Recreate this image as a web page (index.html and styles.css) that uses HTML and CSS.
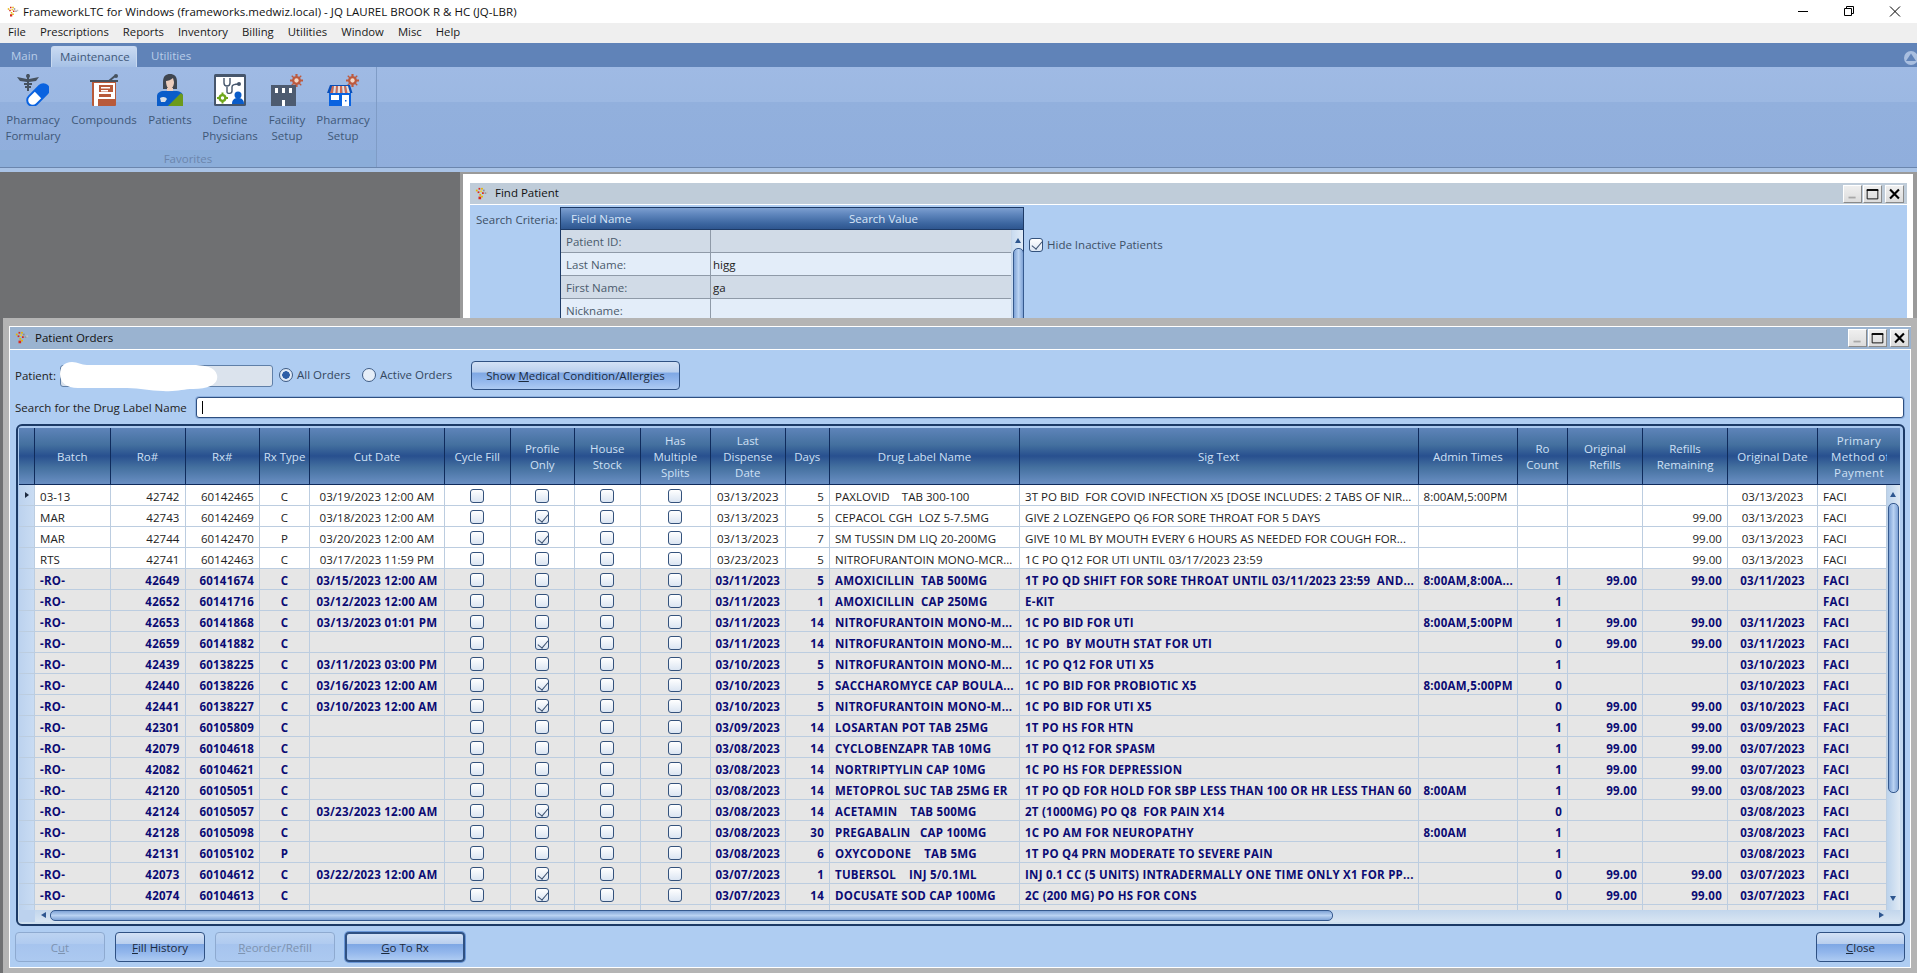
FILE: index.html
```html
<!DOCTYPE html>
<html lang="en">
<head>
<meta charset="utf-8">
<title>FrameworkLTC for Windows</title>
<link rel="stylesheet" href="styles.css">
</head>
<body>
<svg class="defs" width="0" height="0" aria-hidden="true">
  <symbol id="appicon" viewBox="0 0 16 16">
    <rect x="1" y="3" width="2" height="2" fill="#e8b400"/><rect x="4" y="1" width="2" height="2" fill="#d62a1e"/><rect x="7" y="1" width="2" height="2" fill="#e8b400"/><rect x="3" y="5" width="2" height="2" fill="#d62a1e"/><rect x="6" y="4" width="2" height="2" fill="#f2cc2a"/><rect x="9" y="3" width="2" height="2" fill="#8d8d8d"/><rect x="5" y="8" width="2" height="2" fill="#e8b400"/><rect x="8" y="6" width="2" height="2" fill="#d62a1e"/><rect x="11" y="6" width="2" height="2" fill="#9a9a9a"/><rect x="13" y="5" width="2" height="2" fill="#c4c4c4"/><rect x="4" y="11" width="3" height="3" fill="#d62a1e"/><rect x="7" y="10" width="2" height="2" fill="#e8b400"/>
  </symbol>
  <symbol id="gear" viewBox="0 0 12 12">
    <path fill="#bd5a3f" d="M5 0h2v2l1.500.6L10 1.200 10.800 2 9.400 3.500 10 5h2v2h-2l-.6 1.500L10.800 10 10 10.800 8.500 9.400 7 10v2H5v-2l-1.500-.6L2 10.800 1.200 10l1.400-1.500L2 7H0V5h2l.6-1.500L1.200 2 2 1.200l1.500 1.400L5 2z"/>
    <circle cx="6" cy="6" r="2" fill="#f0d8c8"/>
  </symbol>
  <symbol id="winmin" viewBox="0 0 19 18"><rect x="5" y="12" width="8" height="2" fill="#a8a8a8"/></symbol>
  <symbol id="winmax" viewBox="0 0 19 18"><path fill="none" stroke="#000" d="M3.500 4.500h12v10h-12z"/><rect x="3" y="3.500" width="13" height="2" fill="#000"/></symbol>
  <symbol id="winclose" viewBox="0 0 19 18"><path stroke="#000" stroke-width="2.400" d="M4.500 4l10 10M14.500 4l-10 10"/></symbol>
</svg>

<header class="titlebar">
  <svg class="app-icon"><use href="#appicon"/></svg>
  <span class="title-text">FrameworkLTC for Windows (frameworks.medwiz.local) - JQ LAUREL BROOK R &amp; HC (JQ-LBR)</span>
  <div class="sys-buttons">
    <svg class="sys-btn" viewBox="0 0 46 20"><path stroke="#000" d="M18 10.500h10"/></svg>
    <svg class="sys-btn" viewBox="0 0 46 20"><path fill="none" stroke="#000" d="M18.500 7.500h7v7h-7zM20.500 7.500v-2h7v7h-2"/></svg>
    <svg class="sys-btn" viewBox="0 0 46 20"><path stroke="#000" d="M18 5.500l10 10M28 5.500l-10 10"/></svg>
  </div>
</header>

<nav class="menubar">
  <span>File</span><span>Prescriptions</span><span>Reports</span><span>Inventory</span><span>Billing</span><span>Utilities</span><span>Window</span><span>Misc</span><span>Help</span>
</nav>

<div class="tabstrip">
  <span class="tab">Main</span>
  <span class="tab active">Maintenance</span>
  <span class="tab tab-last">Utilities</span>
  <span class="collapse"><svg width="14" height="14" viewBox="0 0 14 14"><circle cx="7" cy="7" r="7" fill="#a9bfe0"/><path d="M7 2.500L12 10H2z" fill="#6083b8"/></svg></span>
</div>

<section class="ribbon">
  <div class="rgroup">
    <div class="rbuttons">
      <div class="rbtn">
        <svg class="ricon" viewBox="0 0 32 32">
          <g fill="#46525f"><rect x="10" y="0" width="2" height="17"/><path d="M0 3l10 2v3L3 7zM22 3L12 5v3l7-1z"/><path d="M7 9h8v2H7zM8 12h6v2H8z"/><circle cx="11" cy="2" r="2"/></g>
          <g transform="rotate(-45 21 21)"><rect x="7" y="14.500" width="28" height="13" rx="6.500" fill="#0a63e0"/><path d="M21 16.500H13.500a4.500 4.500 0 0 0 0 9H21z" fill="#fff"/></g>
        </svg>
        <span>Pharmacy<br>Formulary</span>
      </div>
      <div class="rbtn">
        <svg class="ricon" viewBox="0 0 32 32">
          <path d="M21 7l6-5" stroke="#46525f" stroke-width="2"/><circle cx="28" cy="2" r="2" fill="#46525f"/>
          <rect x="2" y="6" width="28" height="2" fill="#46525f"/>
          <path d="M4 8h24v23a1 1 0 0 1-1 1H5a1 1 0 0 1-1-1z" fill="#b85a3a"/>
          <path d="M6 9h21v16H10v7H6z" fill="#fff"/>
          <path d="M11 11h14v7H11zM11 20h12v3H11z" fill="#b85a3a"/>
          <path d="M13 13h9v1.500h-9zM13 16h7v1.500h-7z" fill="#fff"/>
        </svg>
        <span>Compounds</span>
      </div>
      <div class="rbtn">
        <svg class="ricon" viewBox="0 0 32 32">
          <path d="M9 8c0-6 3-8 7-8s7 2 7 8v7H9z" fill="#3f4650"/>
          <path d="M12 7c2 0 5-1 7-3l1 4c0 4-2 7-4 7s-4-3-4-8z" fill="#eccdbd"/>
          <path d="M13 14h6v6h-6z" fill="#eccdbd"/>
          <path d="M3 32V22c0-3 3-5 7-5h11c5 0 8 2 8 5v10z" fill="#0a5cc9"/>
          <path d="M14 32l13-13 2 2v11z" fill="#6c9a1b"/>
          <path d="M6 24c3-2 6-1 7 1l-2 3H7z" fill="#d9dee6"/>
        </svg>
        <span>Patients</span>
      </div>
      <div class="rbtn">
        <svg class="ricon" viewBox="0 0 32 32">
          <rect width="32" height="32" rx="1.500" fill="#46566c"/>
          <rect x="2" y="3" width="28" height="27" fill="#fff"/>
          <path d="M10 4v5c0 4 6 4 6 0V4M13 13v5c0 2 5 2 5-1v-4c0-2 3-3 7-3" fill="none" stroke="#46566c" stroke-width="1.400"/>
          <circle cx="25" cy="10" r="2" fill="#46566c"/>
          <g fill="#6fa71b"><circle cx="8.500" cy="24" r="4"/><path d="M7.500 18.500h2v11h-2zM3 23h11v2H3z"/></g><circle cx="8.500" cy="24" r="1.700" fill="#fff"/>
          <circle cx="24" cy="21" r="3.500" fill="#0a5cc9"/><path d="M18 30c0-5 3-6 6-6s6 1 6 6z" fill="#0a5cc9"/>
        </svg>
        <span>Define<br>Physicians</span>
      </div>
      <div class="rbtn">
        <svg class="ricon" viewBox="0 0 32 32">
          <use href="#gear" x="19" y="0" width="13" height="13"/>
          <path d="M0 11h25v21H0z" fill="#4d5b70"/>
          <path d="M4 14h3v5H4zM11 14h3v5h-3zM18 14h3v5h-3zM11 26h3v6h-3z" fill="#fff"/>
        </svg>
        <span>Facility<br>Setup</span>
      </div>
      <div class="rbtn">
        <svg class="ricon" viewBox="0 0 32 32">
          <use href="#gear" x="19" y="0" width="13" height="13"/>
          <rect x="2" y="17" width="22" height="15" fill="#0a63e0"/>
          <path d="M3 11h20l2.500 8H0z" fill="#0a4fb8"/>
          <path d="M5 12h2l-1 7H3zM9 12h2l-.5 7h-2zM13 12h2l.5 7h-2.500zM17 12h2l1.500 7H18z" fill="#cf6a52"/>
          <path d="M7 12h2l-.5 7H6zM11 12h2v7h-2.500zM15 12h2l1 7h-2.500zM19 12h2l2 7h-2.500z" fill="#f2dcd2"/>
          <path d="M4 21h8v5H4zM15 21h7v11h-7z" fill="#fff"/>
          <rect x="18" y="26" width="1.500" height="1.500" fill="#0a63e0"/>
        </svg>
        <span>Pharmacy<br>Setup</span>
      </div>
    </div>
    <div class="rgroup-label">Favorites</div>
  </div>
</section>
<div class="ribbon-foot"></div>

<main class="mdi">
  <section class="win win-find">
    <div class="find-title">
      <svg class="win-icon"><use href="#appicon"/></svg>
      <span class="win-name">Find Patient</span>
      <div class="win-controls">
        <svg class="wc" viewBox="0 0 19 18"><use href="#winmin"/></svg>
        <svg class="wc" viewBox="0 0 19 18"><use href="#winmax"/></svg>
        <svg class="wc wc-close" viewBox="0 0 19 18"><use href="#winclose"/></svg>
      </div>
    </div>
    <div class="find-body">
      <label class="find-label">Search Criteria:</label>
      <div class="find-grid">
        <div class="find-head"><span class="fh1">Field Name</span><span class="fh2">Search Value</span></div>
        <div class="find-main">
          <div class="find-rows">
            <div class="frow alt"><span class="fk">Patient ID:</span><span class="fv"></span></div>
            <div class="frow"><span class="fk">Last Name:</span><span class="fv">higg</span></div>
            <div class="frow alt"><span class="fk">First Name:</span><span class="fv">ga</span></div>
            <div class="frow"><span class="fk">Nickname:</span><span class="fv"></span></div>
          </div>
          <div class="find-scroll"><i class="arrow-up"></i><i class="vthumb"></i></div>
        </div>
      </div>
      <label class="hide-inactive"><i class="cb on"></i>Hide Inactive Patients</label>
    </div>
  </section>

  <section class="win win-orders">
    <div class="orders-title">
      <svg class="win-icon"><use href="#appicon"/></svg>
      <span class="win-name">Patient Orders</span>
      <div class="win-controls">
        <svg class="wc" viewBox="0 0 19 18"><use href="#winmin"/></svg>
        <svg class="wc" viewBox="0 0 19 18"><use href="#winmax"/></svg>
        <svg class="wc wc-close" viewBox="0 0 19 18"><use href="#winclose"/></svg>
      </div>
    </div>
    <div class="orders-body">
      <div class="patient-row">
        <span class="patient-label">Patient:</span>
        <div class="patient-box"></div>
        <label class="radio-all"><i class="radio on"></i>All Orders</label>
        <label class="radio-active"><i class="radio"></i>Active Orders</label>
        <button class="btn btn-med">Show <u>M</u>edical Condition/Allergies</button>
        <svg class="redact" viewBox="0 0 158 30"><path fill="#fff" d="M12 0c6 0 9 3 15 3h104c14 0 24 2 26 10 2 9-8 14-24 14-10 0-16 3-30 2-14 0-22-3-36-3H18C6 26 0 20 0 12 0 5 4 0 12 0z"/></svg>
      </div>
      <div class="search-row">
        <span class="search-label">Search for the Drug Label Name</span>
        <div class="search-input"><i class="caret"></i></div>
      </div>

      <div class="grid-box">
        <div class="grid-main">
          <table class="orders">
            <colgroup>
              <col class="k0"><col class="k1"><col class="k2"><col class="k3"><col class="k4"><col class="k5"><col class="k6"><col class="k7"><col class="k8"><col class="k9"><col class="k10"><col class="k11"><col class="k12"><col class="k13"><col class="k14"><col class="k15"><col class="k16"><col class="k17"><col class="k18"><col class="k19">
            </colgroup>
            <thead>
              <tr><th></th><th>Batch</th><th>Ro#</th><th>Rx#</th><th>Rx Type</th><th>Cut Date</th><th>Cycle Fill</th><th>Profile<br>Only</th><th>House<br>Stock</th><th>Has<br>Multiple<br>Splits</th><th>Last<br>Dispense<br>Date</th><th>Days</th><th>Drug Label Name</th><th>Sig Text</th><th>Admin Times</th><th>Ro<br>Count</th><th>Original<br>Refills</th><th>Refills<br>Remaining</th><th>Original Date</th><th class="clip">Primary<br>Method of<br>Payment</th></tr>
            </thead>
            <tbody>
              <tr><td class="ind cur"></td><td>03-13</td><td class="r">42742</td><td class="r">60142465</td><td class="c">C</td><td class="c">03/19/2023 12:00 AM</td><td class="c"><i class="cb"></i></td><td class="c"><i class="cb"></i></td><td class="c"><i class="cb"></i></td><td class="c"><i class="cb"></i></td><td class="c">03/13/2023</td><td class="r">5</td><td>PAXLOVID    TAB 300-100</td><td>3T PO BID  FOR COVID INFECTION X5 [DOSE INCLUDES: 2 TABS OF NIR...</td><td>8:00AM,5:00PM</td><td></td><td></td><td></td><td class="c">03/13/2023</td><td>FACI</td></tr>
              <tr><td class="ind"></td><td>MAR</td><td class="r">42743</td><td class="r">60142469</td><td class="c">C</td><td class="c">03/18/2023 12:00 AM</td><td class="c"><i class="cb"></i></td><td class="c"><i class="cb on"></i></td><td class="c"><i class="cb"></i></td><td class="c"><i class="cb"></i></td><td class="c">03/13/2023</td><td class="r">5</td><td>CEPACOL CGH  LOZ 5-7.5MG</td><td>GIVE 2 LOZENGEPO Q6 FOR SORE THROAT FOR 5 DAYS</td><td></td><td></td><td></td><td class="r">99.00</td><td class="c">03/13/2023</td><td>FACI</td></tr>
              <tr><td class="ind"></td><td>MAR</td><td class="r">42744</td><td class="r">60142470</td><td class="c">P</td><td class="c">03/20/2023 12:00 AM</td><td class="c"><i class="cb"></i></td><td class="c"><i class="cb on"></i></td><td class="c"><i class="cb"></i></td><td class="c"><i class="cb"></i></td><td class="c">03/13/2023</td><td class="r">7</td><td>SM TUSSIN DM LIQ 20-200MG</td><td>GIVE 10 ML BY MOUTH EVERY 6 HOURS AS NEEDED FOR COUGH FOR...</td><td></td><td></td><td></td><td class="r">99.00</td><td class="c">03/13/2023</td><td>FACI</td></tr>
              <tr><td class="ind"></td><td>RTS</td><td class="r">42741</td><td class="r">60142463</td><td class="c">C</td><td class="c">03/17/2023 11:59 PM</td><td class="c"><i class="cb"></i></td><td class="c"><i class="cb"></i></td><td class="c"><i class="cb"></i></td><td class="c"><i class="cb"></i></td><td class="c">03/23/2023</td><td class="r">5</td><td>NITROFURANTOIN MONO-MCR...</td><td>1C PO Q12 FOR UTI UNTIL 03/17/2023 23:59</td><td></td><td></td><td></td><td class="r">99.00</td><td class="c">03/13/2023</td><td>FACI</td></tr>
              <tr class="b"><td class="ind"></td><td>-RO-</td><td class="r">42649</td><td class="r">60141674</td><td class="c">C</td><td class="c">03/15/2023 12:00 AM</td><td class="c"><i class="cb"></i></td><td class="c"><i class="cb"></i></td><td class="c"><i class="cb"></i></td><td class="c"><i class="cb"></i></td><td class="c">03/11/2023</td><td class="r">5</td><td>AMOXICILLIN  TAB 500MG</td><td>1T PO QD SHIFT FOR SORE THROAT UNTIL 03/11/2023 23:59  AND...</td><td>8:00AM,8:00A...</td><td class="r">1</td><td class="r">99.00</td><td class="r">99.00</td><td class="c">03/11/2023</td><td>FACI</td></tr>
              <tr class="b"><td class="ind"></td><td>-RO-</td><td class="r">42652</td><td class="r">60141716</td><td class="c">C</td><td class="c">03/12/2023 12:00 AM</td><td class="c"><i class="cb"></i></td><td class="c"><i class="cb"></i></td><td class="c"><i class="cb"></i></td><td class="c"><i class="cb"></i></td><td class="c">03/11/2023</td><td class="r">1</td><td>AMOXICILLIN  CAP 250MG</td><td>E-KIT</td><td></td><td class="r">1</td><td></td><td></td><td></td><td>FACI</td></tr>
              <tr class="b"><td class="ind"></td><td>-RO-</td><td class="r">42653</td><td class="r">60141868</td><td class="c">C</td><td class="c">03/13/2023 01:01 PM</td><td class="c"><i class="cb"></i></td><td class="c"><i class="cb"></i></td><td class="c"><i class="cb"></i></td><td class="c"><i class="cb"></i></td><td class="c">03/11/2023</td><td class="r">14</td><td>NITROFURANTOIN MONO-M...</td><td>1C PO BID FOR UTI</td><td>8:00AM,5:00PM</td><td class="r">1</td><td class="r">99.00</td><td class="r">99.00</td><td class="c">03/11/2023</td><td>FACI</td></tr>
              <tr class="b"><td class="ind"></td><td>-RO-</td><td class="r">42659</td><td class="r">60141882</td><td class="c">C</td><td class="c"></td><td class="c"><i class="cb"></i></td><td class="c"><i class="cb on"></i></td><td class="c"><i class="cb"></i></td><td class="c"><i class="cb"></i></td><td class="c">03/11/2023</td><td class="r">14</td><td>NITROFURANTOIN MONO-M...</td><td>1C PO  BY MOUTH STAT FOR UTI</td><td></td><td class="r">0</td><td class="r">99.00</td><td class="r">99.00</td><td class="c">03/11/2023</td><td>FACI</td></tr>
              <tr class="b"><td class="ind"></td><td>-RO-</td><td class="r">42439</td><td class="r">60138225</td><td class="c">C</td><td class="c">03/11/2023 03:00 PM</td><td class="c"><i class="cb"></i></td><td class="c"><i class="cb"></i></td><td class="c"><i class="cb"></i></td><td class="c"><i class="cb"></i></td><td class="c">03/10/2023</td><td class="r">5</td><td>NITROFURANTOIN MONO-M...</td><td>1C PO Q12 FOR UTI X5</td><td></td><td class="r">1</td><td></td><td></td><td class="c">03/10/2023</td><td>FACI</td></tr>
              <tr class="b"><td class="ind"></td><td>-RO-</td><td class="r">42440</td><td class="r">60138226</td><td class="c">C</td><td class="c">03/16/2023 12:00 AM</td><td class="c"><i class="cb"></i></td><td class="c"><i class="cb on"></i></td><td class="c"><i class="cb"></i></td><td class="c"><i class="cb"></i></td><td class="c">03/10/2023</td><td class="r">5</td><td>SACCHAROMYCE CAP BOULA...</td><td>1C PO BID FOR PROBIOTIC X5</td><td>8:00AM,5:00PM</td><td class="r">0</td><td></td><td></td><td class="c">03/10/2023</td><td>FACI</td></tr>
              <tr class="b"><td class="ind"></td><td>-RO-</td><td class="r">42441</td><td class="r">60138227</td><td class="c">C</td><td class="c">03/10/2023 12:00 AM</td><td class="c"><i class="cb"></i></td><td class="c"><i class="cb on"></i></td><td class="c"><i class="cb"></i></td><td class="c"><i class="cb"></i></td><td class="c">03/10/2023</td><td class="r">5</td><td>NITROFURANTOIN MONO-M...</td><td>1C PO BID FOR UTI X5</td><td></td><td class="r">0</td><td class="r">99.00</td><td class="r">99.00</td><td class="c">03/10/2023</td><td>FACI</td></tr>
              <tr class="b"><td class="ind"></td><td>-RO-</td><td class="r">42301</td><td class="r">60105809</td><td class="c">C</td><td class="c"></td><td class="c"><i class="cb"></i></td><td class="c"><i class="cb"></i></td><td class="c"><i class="cb"></i></td><td class="c"><i class="cb"></i></td><td class="c">03/09/2023</td><td class="r">14</td><td>LOSARTAN POT TAB 25MG</td><td>1T PO HS FOR HTN</td><td></td><td class="r">1</td><td class="r">99.00</td><td class="r">99.00</td><td class="c">03/09/2023</td><td>FACI</td></tr>
              <tr class="b"><td class="ind"></td><td>-RO-</td><td class="r">42079</td><td class="r">60104618</td><td class="c">C</td><td class="c"></td><td class="c"><i class="cb"></i></td><td class="c"><i class="cb"></i></td><td class="c"><i class="cb"></i></td><td class="c"><i class="cb"></i></td><td class="c">03/08/2023</td><td class="r">14</td><td>CYCLOBENZAPR TAB 10MG</td><td>1T PO Q12 FOR SPASM</td><td></td><td class="r">1</td><td class="r">99.00</td><td class="r">99.00</td><td class="c">03/07/2023</td><td>FACI</td></tr>
              <tr class="b"><td class="ind"></td><td>-RO-</td><td class="r">42082</td><td class="r">60104621</td><td class="c">C</td><td class="c"></td><td class="c"><i class="cb"></i></td><td class="c"><i class="cb"></i></td><td class="c"><i class="cb"></i></td><td class="c"><i class="cb"></i></td><td class="c">03/08/2023</td><td class="r">14</td><td>NORTRIPTYLIN CAP 10MG</td><td>1C PO HS FOR DEPRESSION</td><td></td><td class="r">1</td><td class="r">99.00</td><td class="r">99.00</td><td class="c">03/07/2023</td><td>FACI</td></tr>
              <tr class="b"><td class="ind"></td><td>-RO-</td><td class="r">42120</td><td class="r">60105051</td><td class="c">C</td><td class="c"></td><td class="c"><i class="cb"></i></td><td class="c"><i class="cb"></i></td><td class="c"><i class="cb"></i></td><td class="c"><i class="cb"></i></td><td class="c">03/08/2023</td><td class="r">14</td><td>METOPROL SUC TAB 25MG ER</td><td>1T PO QD FOR HOLD FOR SBP LESS THAN 100 OR HR LESS THAN 60</td><td>8:00AM</td><td class="r">1</td><td class="r">99.00</td><td class="r">99.00</td><td class="c">03/08/2023</td><td>FACI</td></tr>
              <tr class="b"><td class="ind"></td><td>-RO-</td><td class="r">42124</td><td class="r">60105057</td><td class="c">C</td><td class="c">03/23/2023 12:00 AM</td><td class="c"><i class="cb"></i></td><td class="c"><i class="cb on"></i></td><td class="c"><i class="cb"></i></td><td class="c"><i class="cb"></i></td><td class="c">03/08/2023</td><td class="r">14</td><td>ACETAMIN    TAB 500MG</td><td>2T (1000MG) PO Q8  FOR PAIN X14</td><td></td><td class="r">0</td><td></td><td></td><td class="c">03/08/2023</td><td>FACI</td></tr>
              <tr class="b"><td class="ind"></td><td>-RO-</td><td class="r">42128</td><td class="r">60105098</td><td class="c">C</td><td class="c"></td><td class="c"><i class="cb"></i></td><td class="c"><i class="cb"></i></td><td class="c"><i class="cb"></i></td><td class="c"><i class="cb"></i></td><td class="c">03/08/2023</td><td class="r">30</td><td>PREGABALIN   CAP 100MG</td><td>1C PO AM FOR NEUROPATHY</td><td>8:00AM</td><td class="r">1</td><td></td><td></td><td class="c">03/08/2023</td><td>FACI</td></tr>
              <tr class="b"><td class="ind"></td><td>-RO-</td><td class="r">42131</td><td class="r">60105102</td><td class="c">P</td><td class="c"></td><td class="c"><i class="cb"></i></td><td class="c"><i class="cb"></i></td><td class="c"><i class="cb"></i></td><td class="c"><i class="cb"></i></td><td class="c">03/08/2023</td><td class="r">6</td><td>OXYCODONE    TAB 5MG</td><td>1T PO Q4 PRN MODERATE TO SEVERE PAIN</td><td></td><td class="r">1</td><td></td><td></td><td class="c">03/08/2023</td><td>FACI</td></tr>
              <tr class="b"><td class="ind"></td><td>-RO-</td><td class="r">42073</td><td class="r">60104612</td><td class="c">C</td><td class="c">03/22/2023 12:00 AM</td><td class="c"><i class="cb"></i></td><td class="c"><i class="cb on"></i></td><td class="c"><i class="cb"></i></td><td class="c"><i class="cb"></i></td><td class="c">03/07/2023</td><td class="r">1</td><td>TUBERSOL    INJ 5/0.1ML</td><td>INJ 0.1 CC (5 UNITS) INTRADERMALLY ONE TIME ONLY X1 FOR PP...</td><td></td><td class="r">0</td><td class="r">99.00</td><td class="r">99.00</td><td class="c">03/07/2023</td><td>FACI</td></tr>
              <tr class="b"><td class="ind"></td><td>-RO-</td><td class="r">42074</td><td class="r">60104613</td><td class="c">C</td><td class="c"></td><td class="c"><i class="cb"></i></td><td class="c"><i class="cb on"></i></td><td class="c"><i class="cb"></i></td><td class="c"><i class="cb"></i></td><td class="c">03/07/2023</td><td class="r">14</td><td>DOCUSATE SOD CAP 100MG</td><td>2C (200 MG) PO HS FOR CONS</td><td></td><td class="r">0</td><td class="r">99.00</td><td class="r">99.00</td><td class="c">03/07/2023</td><td>FACI</td></tr>
              <tr class="b partial"><td class="ind"></td><td></td><td></td><td></td><td></td><td></td><td></td><td></td><td></td><td></td><td></td><td></td><td></td><td></td><td></td><td></td><td></td><td></td><td></td><td></td></tr>
            </tbody>
          </table>
          <div class="vscroll">
            <div class="vhead"></div>
            <div class="vtrack"><i class="arrow-up"></i><i class="vthumb long"></i><i class="arrow-down"></i></div>
          </div>
        </div>
        <div class="hscroll">
          <div class="hcorner"></div>
          <i class="arrow-left"></i>
          <i class="hthumb"></i>
          <i class="arrow-right"></i>
        </div>
      </div>

      <div class="actions">
        <button class="btn btn-disabled w90">C<u>u</u>t</button>
        <button class="btn w90"><u>F</u>ill History</button>
        <button class="btn btn-disabled w120"><u>R</u>eorder/Refill</button>
        <button class="btn btn-focus w120"><u>G</u>o To Rx</button>
        <button class="btn w89 close-btn"><u>C</u>lose</button>
      </div>
    </div>
  </section>
</main>
</body>
</html>
```

FILE: styles.css
```css
* { box-sizing: border-box; }
html, body { height: 100%; }
body {
  margin: 0;
  display: flex;
  flex-direction: column;
  overflow: hidden;
  font-family: "Open Sans", "Noto Sans", sans-serif;
  font-size: 11.5px;
  color: #222;
  background: #6f7072;
}
.defs { position: absolute; }
i { display: inline-block; font-style: normal; }

/* Title bar */
.titlebar { height: 23px; background: #fff; display: flex; align-items: center; flex: none; }
.app-icon { width: 12px; height: 12px; margin: 0 4px 0 7px; }
.title-text { font-size: 11.5px; letter-spacing: .03px; color: #111; }
.sys-buttons { margin-left: auto; display: flex; margin-right: -1px; }
.sys-btn { width: 46px; height: 20px; margin-top: -2px; }

/* Menu */
.menubar { height: 20px; background: #efefef; display: flex; align-items: center; padding: 0 0 3px 1px; flex: none; font-size: 11.300px; color: #1a1a1a; }
.menubar span { padding: 0 7px; }

/* Tabs */
.tabstrip { height: 24px; background: #6083b8; display: flex; align-items: flex-end; flex: none; padding-left: 0; position: relative; overflow: hidden; }
.tab { height: 21px; line-height: 20px; padding: 0 11px; color: #b9cde8; width: 51px; }
.tab.active { width: 86px; padding: 0 8px; color: #41597a; background: linear-gradient(#c9daf2, #a6c1e6); border: 1px solid #c8d9f0; border-bottom: 0; border-radius: 3px 3px 0 0; }
.tab-last { padding-left: 14px; width: 70px; }
.collapse { position: absolute; right: -1px; top: 8px; height: 14px; }

/* Ribbon */
.ribbon { height: 101px; flex: none; background: linear-gradient(#9fbae4 0, #9cb8e2 35%, #92b0dd 35%, #90aedc 100%); border-bottom: 1px solid #6b86ae; }
.rgroup { width: 377px; height: 100%; border-right: 1px solid #7f9cc6; display: flex; flex-direction: column; }
.rbuttons { display: grid; grid-template-columns: 66px 76px 56px 64px 50px 62px; padding-top: 7px; height: 83px; }
.rbtn { display: flex; flex-direction: column; align-items: center; text-align: center; color: #3f5878; line-height: 16px; }
.ricon { width: 32px; height: 32px; margin-bottom: 6px; flex: none; }
.rgroup-label { height: 17px; padding-top: 1px; line-height: 16px; text-align: center; color: #6b86ad; background: #8badd9; }
.ribbon-foot { height: 4px; flex: none; background: #a9c3e6; }

/* MDI windows */
.mdi { flex: 1; position: relative; background: #6f7072; overflow: hidden; }
.win { position: absolute; }
.win-icon { width: 14px; height: 14px; margin: 0 6px 0 5px; flex: none; }
.win-name { margin-top: -2px; }
.win-controls { margin-left: auto; display: flex; gap: 1px; }
.wc { width: 19px; height: 18px; background: linear-gradient(#efefef, #dcdcdc); border: 1px solid #fff; border-right-color: #8a8a8a; border-bottom-color: #8a8a8a; }
.wc-close { margin-left: 2px; }

.win-find { left: 460px; right: 0; top: 0; height: 160px; background: #fff; border: solid #9a9a9a; border-width: 2px 4px 0 3px; padding: 9px 6px 0 7px; }
.find-title { height: 21px; background: #bfccd9; display: flex; align-items: center; color: #111; font-size: 11.5px; padding-right: 3px; }
.find-body { margin-top: 1px; height: 130px; background: #afcdf2; display: flex; align-items: flex-start; padding: 2px 0 0 6px; color: #3d5066; }
.find-label { width: 84px; padding-top: 5px; flex: none; }
.find-grid { width: 464px; flex: none; border: 1px solid #1d3a66; border-bottom: 0; background: #d7e4f3; }
.find-head { height: 22px; display: flex; align-items: center; color: #d8e6f8; background: linear-gradient(#7d9fd0 0, #5f86bd 30%, #3b659f 75%, #2e568f 100%); border-bottom: 1px solid #1d3a66; }
.fh1 { width: 150px; padding-left: 10px; }
.fh2 { width: 300px; padding-left: 138px; }
.find-main { display: flex; }
.find-rows { width: 450px; flex: none; }
.frow { height: 23px; display: flex; background: #e3edf9; border-bottom: 1px solid #8f9aa8; color: #333; line-height: 21px; padding-top: 1px; }
.frow.alt { background: #d1dbe7; }
.fk { width: 150px; padding-left: 5px; color: #4a5a6c; position: relative; }
.fk::after { content: ""; position: absolute; right: 0; top: -1px; bottom: 0; border-right: 1px solid #8f9aa8; }
.fv { padding-left: 2px; color: #222; }
.find-scroll { width: 13px; height: 90px; background: linear-gradient(90deg, #c9dbf0, #e0ebf7); position: relative; border-left: 1px solid #c5d5e8; }
.find-scroll .vthumb { position: absolute; left: 1px; top: 18px; width: 11px; height: 90px; }
.find-scroll .arrow-up { position: absolute; left: 3px; top: 8px; }
.hide-inactive { display: flex; align-items: center; gap: 4px; margin: 30px 0 0 5px; color: #3d5066; }

.win-orders { left: 3px; right: 0; top: 146px; bottom: 0; background: #fff; border: solid #b4b4b4; border-width: 8px 6px 5px 6px; padding: 1px; display: flex; flex-direction: column; }
.orders-title { height: 22px; flex: none; background: #9ab3d0; display: flex; align-items: center; color: #111; padding-right: 2px; margin-right: -1px; }
.orders-body { flex: 1; margin-top: 1px; background: #afcdf2; padding: 11px 5px 5px 5px; display: flex; flex-direction: column; color: #222; }

.patient-row { height: 29px; display: flex; align-items: center; flex: none; position: relative; }
.patient-label { width: 45px; }
.patient-box { width: 213px; height: 22px; background: #dbe3ed; border: 1px solid #5f7fa8; border-radius: 3px; }
.radio-all, .radio-active { display: flex; align-items: center; gap: 4px; color: #33475e; margin-top: -2px; }
.radio-all { width: 83px; margin-left: 6px; }
.radio-active { width: 109px; }
.radio { width: 14px; height: 14px; border-radius: 50%; border: 1px solid #3e5b84; background: #e6eef8; }
.radio.on { background: radial-gradient(circle, #2c5da6 0, #2c5da6 3.500px, #dfe9f6 4px); }
.redact { position: absolute; left: 45px; top: 1px; width: 158px; height: 30px; }

.search-row { height: 20px; margin-top: 7px; display: flex; align-items: center; flex: none; }
.search-label { width: 181px; }
.search-input { flex: 1; height: 21px; background: #fff; border: 1px solid #2e4f80; border-radius: 3px; box-shadow: 0 0 0 1px #8fb2e0; padding: 3px 5px; margin-right: 1px; }
.caret { width: 1px; height: 13px; background: #000; display: block; }

/* Buttons */
.btn { font: inherit; color: #1b2a3d; height: 30px; border: 1px solid #2f5183; border-radius: 4px; padding: 0; background: linear-gradient(#d3e1f5 0, #b9cfee 38%, #7ea7e4 40%, #93b7ec 70%, #aecbf2 100%); text-align: center; }
.btn-med { width: 209px; height: 29px; }
.btn-disabled { border-color: #8eaad0; color: #7d93b0; background: linear-gradient(#bcd3f1 0, #b0cbf0 38%, #a6c4ee 40%, #acc9f0 100%); }
.btn-focus { border: 2px solid #2f5183; box-shadow: 0 0 0 1px #6a97d8; }
.w90 { width: 90px; }
.w120 { width: 120px; }
.w89 { width: 89px; }

/* Grid */
.grid-box { height: 502px; flex: none; margin: 7px 0 0 1px; border: 2px solid #1c3a66; border-radius: 6px; padding: 2px 3px 2px 1px; background: linear-gradient(#a9c8ef, #cfe0ef); }
.grid-main { display: flex; height: 482px; overflow: hidden; }
.orders { width: 1868px; table-layout: fixed; border-collapse: separate; border-spacing: 0; flex: none; }
.k0 { width: 16px; } .k1 { width: 75.500px; } .k2 { width: 75px; } .k3 { width: 74.500px; } .k4 { width: 50px; }
.k5 { width: 135px; } .k6 { width: 65.500px; } .k7 { width: 64.500px; } .k8 { width: 65.500px; } .k9 { width: 70.500px; }
.k10 { width: 74.500px; } .k11 { width: 44.500px; } .k12 { width: 190px; } .k13 { width: 398.500px; } .k14 { width: 99.500px; }
.k15 { width: 50px; } .k16 { width: 75px; } .k17 { width: 85px; } .k18 { width: 90px; } .k19 { width: 69px; }
.orders th { height: 57px; padding: 1px 0 0; font-weight: 400; line-height: 16px; color: #cfe0f5; background: linear-gradient(#5e84b9 0, #44709f 30%, #28508f 50%, #44709f 70%, #6a8fc3 100%); border-right: 1px solid #0f2b5c; border-bottom: 1px solid #0f2b5c; overflow: hidden; white-space: nowrap; }
.orders th.clip { border-right: 0; padding-left: 13px; letter-spacing: .35px; }
.orders td { height: 21px; padding: 3px 5px 0; line-height: 17px; background: #fff; border-right: 1px solid #bccde0; border-bottom: 1px solid #bccde0; overflow: hidden; white-space: pre; color: #222; letter-spacing: .05px; }
.orders tr.b td { background: #e6e6e6; color: #0b0b73; font-weight: 700; letter-spacing: .25px; }
.orders td.r { text-align: right; }
.orders td.c { text-align: center; padding: 3px 0 0; }
.orders td.ind, .orders tr.b td.ind { background: linear-gradient(90deg, #bcd2ee, #c9dcf3); padding: 0; }
.orders td.cur { position: relative; }
.orders td.cur::after { content: ""; position: absolute; left: 6px; top: 7px; border: 3.500px solid transparent; border-left: 4px solid #1c2a40; border-right: 0; }
.orders tr.partial td { height: 5px; line-height: 0; padding: 0; border-bottom: 0; }

.cb { width: 14px; height: 14px; border: 1px solid #34527c; border-radius: 3px; background: linear-gradient(#fff, #dbe5f2); vertical-align: middle; position: relative; flex: none; margin-top: -3px; }
.hide-inactive .cb { margin-top: 0; }
.cb.on::after { content: ""; position: absolute; left: 3.500px; top: .500px; width: 5px; height: 9px; border: solid #3a4f6e; border-width: 0 1.500px 1.500px 0; transform: rotate(40deg); }

/* Scrollbars */
.vscroll { width: 13px; flex: none; display: flex; flex-direction: column; }
.vhead { height: 57px; flex: none; background: linear-gradient(#5e84b9 0, #44709f 30%, #28508f 50%, #44709f 70%, #6a8fc3 100%); border-bottom: 1px solid #0f2b5c; }
.vtrack { flex: 1; position: relative; background: linear-gradient(90deg, #bcd3ec, #dfe9f4); }
.vthumb { display: block; width: 11px; background: linear-gradient(90deg, #7fa3d6, #b9d2f2 50%, #7fa3d6); border: 1px solid #35598e; border-radius: 5px; }
.vthumb.long { position: absolute; left: 1px; top: 18px; height: 290px; }
.arrow-up { position: absolute; width: 0; height: 0; left: 3px; top: 7px; border: 3.500px solid transparent; border-top: 0; border-bottom: 5px solid #2e568f; }
.arrow-down { position: absolute; width: 0; height: 0; left: 3px; top: 411px; border: 3.500px solid transparent; border-bottom: 0; border-top: 5px solid #2e568f; }
.hscroll { height: 12px; display: flex; position: relative; background: linear-gradient(#c2d6ec, #d8e5f2); }
.hcorner { width: 16px; background: #bcd2ee; }
.hthumb { position: absolute; left: 31px; top: 0; height: 11px; width: 1283px; background: linear-gradient(#7fa3d6, #b9d2f2 50%, #7fa3d6); border: 1px solid #35598e; border-radius: 5px; }
.arrow-left { position: absolute; left: 22px; top: 2px; border: 3.500px solid transparent; border-left: 0; border-right: 5px solid #2e568f; }
.arrow-right { position: absolute; left: 1860px; top: 2px; border: 3.500px solid transparent; border-right: 0; border-left: 5px solid #2e568f; }

/* Actions */
.actions { display: flex; gap: 10px; margin-top: 6px; height: 30px; flex: none; }
.close-btn { margin-left: auto; }
```
